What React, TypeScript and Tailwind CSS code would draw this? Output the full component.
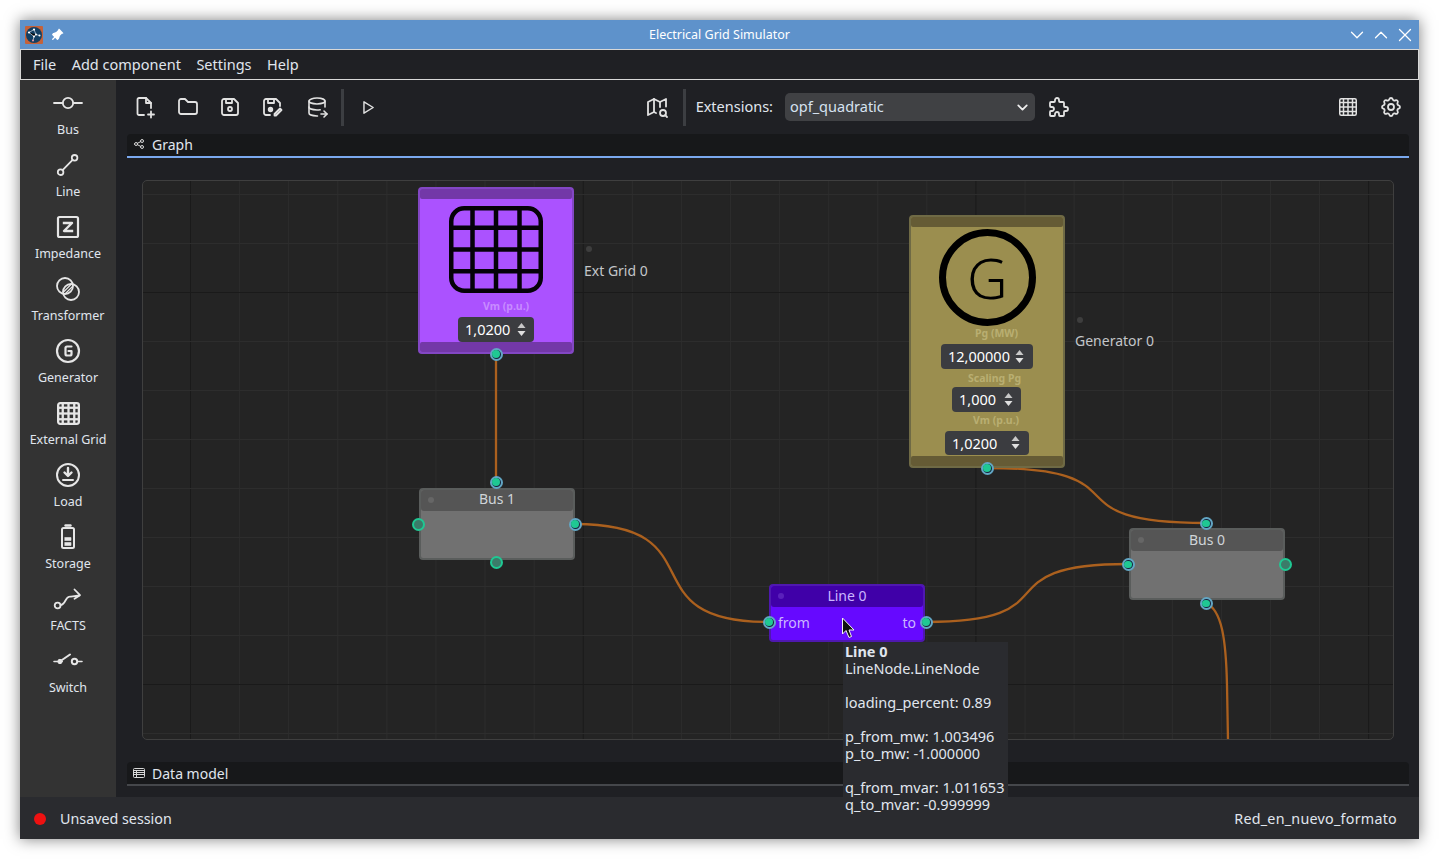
import React from 'react';
import { TbFolder, TbDeviceFloppy, TbDatabaseExport, TbPlayerPlay, TbMapSearch, TbPuzzle, TbSettings, TbShare, TbPinnedFilled, TbChevronDown, TbChevronUp, TbX } from 'react-icons/tb';

const font = "font-['Noto_Sans','Open_Sans',sans-serif]";

function GridIcon({ cols, rows, size, height, stroke, radius, className }: { cols: number; rows: number; size: number; height?: number; stroke: number; radius: number; className?: string }) {
  const h = height || size;
  const xs = Array.from({ length: cols - 1 }, (_, i) => (size / cols) * (i + 1));
  const ys = Array.from({ length: rows - 1 }, (_, i) => (h / rows) * (i + 1));
  return (
    <svg width={size} height={h} viewBox={`0 0 ${size} ${h}`} fill="none" stroke="currentColor" strokeWidth={stroke} className={className}>
      <rect x={stroke / 2} y={stroke / 2} width={size - stroke} height={h - stroke} rx={radius} />
      {xs.map((x) => <line key={x} x1={x} x2={x} y1={0} y2={h} />)}
      {ys.map((y) => <line key={y} x1={0} x2={size} y1={y} y2={y} />)}
    </svg>
  );
}

const icoProps = { width: 30, height: 30, viewBox: '0 0 30 30', fill: 'none', stroke: 'currentColor', strokeWidth: 1.8, strokeLinecap: 'round' as const, strokeLinejoin: 'round' as const };

const BusIcon = () => (
  <svg {...icoProps}><circle cx="15" cy="15" r="5.2" /><path d="M1 15h8.8M20.2 15H29" /></svg>
);
const LineIcon = () => (
  <svg {...icoProps}><circle cx="7.6" cy="22.2" r="2.8" /><circle cx="21.6" cy="7.8" r="2.8" /><path d="M9.6 20.2 19.6 9.8" /></svg>
);
const ImpedanceIcon = () => (
  <svg {...icoProps}><rect x="5" y="5" width="20" height="20" rx="1.500" strokeWidth={2.200} /><path d="M11 11h8l-8 8h8" strokeWidth={2.400} strokeLinecap="square" /></svg>
);
const TransformerIcon = () => (
  <svg {...icoProps}><circle cx="12" cy="12" r="8" /><circle cx="18" cy="18" r="8" /><path d="M12.500 19.500 19.500 12.500M10.500 18 18 10.500" strokeWidth={1.200} /></svg>
);
const GeneratorIcon = () => (
  <svg {...icoProps}><circle cx="15" cy="15" r="11" strokeWidth={2.200} /><path d="M18.500 10.500H14a1.500 1.500 0 0 0-1.500 1.500v6a1.500 1.500 0 0 0 1.500 1.500h3a1.500 1.500 0 0 0 1.500-1.500v-3h-3" strokeWidth={2.200} /></svg>
);
const LoadIcon = () => (
  <svg {...icoProps}><circle cx="15" cy="15" r="11" strokeWidth={2} /><path d="M15 8v7M11.500 12.500 15 16l3.500-3.500" strokeWidth={2.400} /><path d="M10 20h10" strokeWidth={2} /></svg>
);
const StorageIcon = () => (
  <svg {...icoProps}><path d="M12.500 3.500h5" strokeWidth={2.400} /><rect x="9" y="6" width="12" height="20" rx="1.500" strokeWidth={2} /><path d="M12 15.500h6v3h-6zM12 20.500h6v3h-6z" fill="currentColor" strokeWidth={0.6} /></svg>
);
const FactsIcon = () => (
  <svg {...icoProps}><circle cx="4.600" cy="21.500" r="2.900" /><path d="M7.500 21c5 0 4.500-8 9-8.400 3.500-.4 5.500-.4 9.500-1.100" /><path d="M21.500 5.500 27 11.200l-5.500 3.500" /></svg>
);
const SwitchIcon = () => (
  <svg {...icoProps}><path d="M1 15.500h3.500M25 15.500h4" strokeWidth={1.600} /><circle cx="7" cy="15.500" r="2.200" fill="currentColor" strokeWidth={1} /><circle cx="21.500" cy="15.500" r="2.700" strokeWidth={2} /><path d="M7.500 15 17 8.500" strokeWidth={2} /></svg>
);
const NewFileIcon = () => (
  <svg width="24" height="24" viewBox="0 0 24 24" fill="none" stroke="currentColor" strokeWidth="1.800" strokeLinecap="round" strokeLinejoin="round">
    <path d="M11 20H6a1.500 1.500 0 0 1-1.500-1.500v-14A1.500 1.500 0 0 1 6 3h7l5 5v5" />
    <path d="M13 3v5h5" /><path d="M15 19.500h6M18 16.500v6" />
  </svg>
);
const SaveEditIcon = () => (
  <svg width="24" height="24" viewBox="0 0 24 24" fill="none" stroke="currentColor" strokeWidth="1.800" strokeLinecap="round" strokeLinejoin="round">
    <path d="M10 20H6a2 2 0 0 1-2-2V6a2 2 0 0 1 2-2h10l4 4v3" />
    <path d="M8 4v4h6V4" /><circle cx="10.500" cy="14.500" r="1.800" fill="currentColor" />
    <path d="M14.500 20.500v-1.500l5.500-5.500 1.500 1.500-5.500 5.500z" />
  </svg>
);

const AppLogo = () => (
  <svg width="18" height="18" viewBox="0 0 18 18" className="block">
    <rect width="18" height="18" rx="1" fill="#c4623a" />
    <circle cx="9" cy="9" r="8" fill="#123f63" />
    <path d="M4 6.500 9 3.500M9 3.500l2 5M4 6.500l5 4 2-2 3.500 1M9 10.500l-1 4" stroke="#d5dde6" strokeWidth="0.7" />
    <circle cx="4" cy="6.500" r="1.100" fill="#fff" /><circle cx="9" cy="3.500" r="1.100" fill="#fff" /><circle cx="11" cy="8.500" r="1" fill="#fff" />
    <circle cx="9" cy="10.500" r="1" fill="#fff" /><circle cx="14.500" cy="9.500" r="1" fill="#fff" /><circle cx="8" cy="14.500" r="1" fill="#e9a" />
  </svg>
);

function SideItem({ icon, label }: { icon: React.ReactNode; label: string }) {
  return (
    <div className="h-[62px] flex flex-col items-center">
      <div className="h-[30px] w-[30px] flex items-center justify-center text-[#e6e6e6]">{icon}</div>
      <div className="mt-[3px] text-[12.500px] leading-[18px] text-[#e0e6ee] whitespace-nowrap">{label}</div>
    </div>
  );
}

function ToolBtn({ children }: { children: React.ReactNode }) {
  return <div className="w-[43px] h-[30px] flex items-center justify-center text-[#e2e2e2]">{children}</div>;
}

function Sep() {
  return <div className="w-[3px] h-[37px] bg-[#3c3e42]" />;
}

function Spin({ value, className, arrowClass }: { value: string; className: string; arrowClass: string }) {
  return (
    <div className={`absolute h-[24.500px] rounded-[4px] bg-[#3b3c40] text-white text-[14.500px] leading-[24px] ${className}`}>
      <span className="absolute left-[7px] top-0">{value}</span>
      <svg width="9" height="15" viewBox="0 0 9 15" className={`absolute top-[4.500px] ${arrowClass}`}>
        <path d="M4.500 1 8.500 6h-8z" fill="#c8c8c8" /><path d="M4.500 14 .5 9h8z" fill="#e0e0e0" />
      </svg>
    </div>
  );
}

function Handle({ connected, className }: { connected?: boolean; className: string }) {
  if (connected) {
    return (
      <div className={`absolute w-[13px] h-[13px] rounded-full border-[2px] border-[#62a6c4] bg-[#14233a] flex items-center justify-center ${className}`}>
        <div className="w-[7.500px] h-[7.500px] rounded-full bg-[#1fc893]" />
      </div>
    );
  }
  return <div className={`absolute w-[13px] h-[13px] rounded-full border-[2px] border-[#1fc893] bg-[#3b7b69] ${className}`} />;
}

function Dot({ className }: { className: string }) {
  return <div className={`absolute w-[6px] h-[6px] rounded-full bg-[#3e3e3e] ${className}`} />;
}

function BusNode({ title, className, titleClass, handles }: { title: string; className: string; titleClass: string; handles: React.ReactNode }) {
  return (
    <div className={`absolute w-[156px] h-[72px] rounded-[4px] border-[2px] border-[#5a5d5c] bg-[#717171] ${className}`}>
      <div className={`relative h-[21px] rounded-[3px] bg-[#555555] text-center text-[14px] text-[#cfd4d8] ${titleClass}`}>
        <Dot className="left-[7px] top-[7px] bg-[#666666]" />
        {title}
      </div>
      {handles}
    </div>
  );
}

const minorX = Array.from({ length: 26 }, (_, i) => 190.500 + i * 49.090);
const minorY = [194, 243, 341, 390, 439, 488, 537, 586, 635, 733];

function Canvas() {
  return (
    <div className="relative h-full overflow-hidden rounded-[5px] border border-[#3f3f3f] bg-[#242424]">
      <svg className="absolute inset-0" width="1250" height="558" viewBox="143 181 1250 558" fill="none">
        {minorX.map((x, i) => (
          <line key={x} x1={x} x2={x} y1="181" y2="739" stroke={i % 8 === 0 ? '#1a1a1a' : '#2d2d2d'} strokeWidth="1" />
        ))}
        {minorY.map((y) => <line key={y} x1="143" x2="1393" y1={y + 0.5} y2={y + 0.5} stroke="#2d2d2d" strokeWidth="1" />)}
        <line x1="143" x2="1393" y1="292.500" y2="292.500" stroke="#1a1a1a" />
        <line x1="143" x2="1393" y1="684.500" y2="684.500" stroke="#1a1a1a" />
        <g stroke="#ab601e" strokeWidth="2.300">
          <path d="M496 354V482" />
          <path d="M575 524C720 524 625 622 769 622" />
          <path d="M987 468C1151 468 1042 523 1206 523" />
          <path d="M926 622C1076 622 978 564 1128 564" />
          <path d="M1206 603C1222 610 1226 640 1227 685L1228 740" />
        </g>
      </svg>

      {/* Ext grid */}
      <div className="absolute left-[275px] top-[6px] w-[156px] h-[167px] rounded-[4px] border-[2px] border-[#8347c4] bg-[#ab52ff]">
        <div className="h-[10px] rounded-[2px] bg-[#7338a8]" />
        <GridIcon cols={4} rows={4} size={94} height={87} stroke={4.500} radius={13} className="absolute left-[29px] top-[17px] text-[#050208]" />
        <div className="absolute left-[63px] top-[109px] text-[10.500px] leading-[16px] font-bold text-[#c88bff]">Vm (p.u.)</div>
        <Spin value="1,0200" className="left-[38px] top-[128px] w-[76px]" arrowClass="right-[8px]" />
        <div className="absolute left-0 right-0 bottom-0 h-[10px] rounded-[2px] bg-[#7338a8]" />
        <Handle connected className="left-[69.500px] top-[158.500px]" />
      </div>
      <Dot className="left-[443px] top-[65px]" />
      <div className="absolute left-[441px] top-[80px] text-[14px] leading-[20px] text-[#c3c6c9]">Ext Grid 0</div>

      {/* Generator */}
      <div className="absolute left-[766px] top-[34px] w-[155.500px] h-[253px] rounded-[4px] border-[2px] border-[#6f6a45] bg-[#9b8e4f]">
        <div className="h-[10px] rounded-[2px] bg-[#655b35]" />
        <div className="absolute left-[28px] top-[12px] w-[96.500px] h-[96.500px] rounded-full border-[7px] border-black flex items-center justify-center text-[56px] font-light leading-none text-black">G</div>
        <div className="absolute left-[64px] top-[108px] text-[10.500px] leading-[16px] font-bold text-[#b9ae72]">Pg (MW)</div>
        <Spin value="12,00000" className="left-[30px] top-[127px] w-[92px]" arrowClass="right-[9px]" />
        <div className="absolute left-[57px] top-[153px] text-[10.500px] leading-[16px] font-bold text-[#b9ae72]">Scaling Pg</div>
        <Spin value="1,000" className="left-[41px] top-[170px] w-[69px]" arrowClass="right-[8px]" />
        <div className="absolute left-[62px] top-[195px] text-[10.500px] leading-[16px] font-bold text-[#b9ae72]">Vm (p.u.)</div>
        <Spin value="1,0200" className="left-[34px] top-[213.500px] w-[84px]" arrowClass="right-[9px]" />
        <div className="absolute left-0 right-0 bottom-0 h-[10px] rounded-[2px] bg-[#655b35]" />
        <Handle connected className="left-[69.500px] top-[244.500px]" />
      </div>
      <Dot className="left-[934px] top-[136px]" />
      <div className="absolute left-[932px] top-[150px] text-[14px] leading-[20px] text-[#c3c6c9]">Generator 0</div>

      <BusNode
        title="Bus 1"
        titleClass="leading-[18px]"
        className="left-[276px] top-[306.500px]"
        handles={
          <>
            <Handle className="left-[-9.500px] top-[28px]" />
            <Handle connected className="right-[-8.500px] top-[28px]" />
            <Handle connected className="left-[68.500px] top-[-14px]" />
            <Handle className="left-[68.500px] top-[66px]" />
          </>
        }
      />
      <BusNode
        title="Bus 0"
        titleClass="leading-[20px]"
        className="left-[986px] top-[347px]"
        handles={
          <>
            <Handle connected className="left-[-9.500px] top-[28px]" />
            <Handle className="right-[-8.500px] top-[28px]" />
            <Handle connected className="left-[68.500px] top-[-13px]" />
            <Handle connected className="left-[68.500px] top-[67px]" />
          </>
        }
      />

      {/* Line */}
      <div className="absolute left-[626px] top-[403px] w-[156px] h-[58px] rounded-[4px] border-[2px] border-[#4f18b0] bg-[#6609ff] text-[14px] leading-[20px] text-[#cbb6ff]">
        <div className="relative h-[21px] rounded-[3px] bg-[#4000a8] text-center">
          <Dot className="left-[7px] top-[7px] bg-[#5a20bb]" />
          Line 0
        </div>
        <div className="flex justify-between px-[7px] pt-[6px]">
          <span>from</span><span>to</span>
        </div>
        <Handle connected className="left-[-8.500px] top-[29.500px]" />
        <Handle connected className="right-[-9.500px] top-[29.500px]" />
      </div>
    </div>
  );
}

function TabBar({ icon, label, lineClass }: { icon: React.ReactNode; label: string; lineClass: string }) {
  return (
    <div className={`h-[24px] shrink-0 flex items-center gap-[7px] pl-[6px] rounded-t-[4px] bg-[#17181a] border-b-[2px] text-[14px] text-[#e0e6ee] ${lineClass}`}>
      <span className="text-[#d8d8d8]">{icon}</span>
      {label}
    </div>
  );
}

const DataIcon = () => (
  <svg width="12" height="12" viewBox="0 0 12 12" fill="none" stroke="currentColor" strokeWidth="1" className="block">
    <rect x=".5" y="1.500" width="11" height="9" rx="1" /><path d="M.5 3.500h11M.5 5.500h11M.5 7.500h11M3.500 3.500v7" />
  </svg>
);

export default function App() {
  return (
    <div className={`relative w-[1439px] h-[859px] overflow-hidden bg-white p-[20px] ${font}`}>
      <div className="relative w-[1399px] h-[819px] flex flex-col bg-[#1f2024] shadow-[0_0_14px_rgba(0,0,0,0.5)]">
        <div className="h-[29px] shrink-0 grid grid-cols-[1fr_auto_1fr] items-center bg-[#5e92cb] text-white">
          <div className="flex items-center gap-[6px] pl-[5px]">
            <AppLogo />
            <TbPinnedFilled size={16} className="rotate-45" />
          </div>
          <div className="pt-[1px] text-[12.500px] font-normal">Electrical Grid Simulator</div>
          <div className="flex justify-end items-center gap-[2px] pr-[3px]">
            <TbChevronDown size={22} strokeWidth={1.400} /><TbChevronUp size={22} strokeWidth={1.400} /><TbX size={22} strokeWidth={1.400} />
          </div>
        </div>
        <div className="h-[31px] shrink-0 flex items-center gap-[15.500px] pl-[12px] bg-[#1f2024] border border-[#d8d8d8] text-[14.500px] text-[#e0e6ee]">
          <span>File</span><span>Add component</span><span>Settings</span><span>Help</span>
        </div>
        <div className="flex-1 min-h-0 flex">
          <div className="w-[96px] shrink-0 pt-[8px] bg-[#333333]">
            <SideItem icon={<BusIcon />} label="Bus" />
            <SideItem icon={<LineIcon />} label="Line" />
            <SideItem icon={<ImpedanceIcon />} label="Impedance" />
            <SideItem icon={<TransformerIcon />} label="Transformer" />
            <SideItem icon={<GeneratorIcon />} label="Generator" />
            <SideItem icon={<GridIcon cols={4} rows={4} size={23} stroke={2.300} radius={2} />} label="External Grid" />
            <SideItem icon={<LoadIcon />} label="Load" />
            <SideItem icon={<StorageIcon />} label="Storage" />
            <SideItem icon={<FactsIcon />} label="FACTS" />
            <SideItem icon={<SwitchIcon />} label="Switch" />
          </div>
          <div className="flex-1 min-w-0 flex flex-col">
            <div className="h-[54px] shrink-0 flex items-center pl-[7px] pr-[7px]">
              <ToolBtn><NewFileIcon /></ToolBtn>
              <ToolBtn><TbFolder size={24} strokeWidth={1.800} /></ToolBtn>
              <ToolBtn><span className="mr-[2px]"><TbDeviceFloppy size={24} strokeWidth={1.800} /></span></ToolBtn>
              <ToolBtn><span className="mr-[3px]"><SaveEditIcon /></span></ToolBtn>
              <ToolBtn><TbDatabaseExport size={24} strokeWidth={1.600} /></ToolBtn>
              <div className="ml-[3px]"><Sep /></div>
              <div className="ml-[2px]"><ToolBtn><TbPlayerPlay size={17} strokeWidth={2} /></ToolBtn></div>
              <div className="flex-1" />
              <ToolBtn><span className="mr-[3px]"><TbMapSearch size={24} strokeWidth={1.800} /></span></ToolBtn>
              <div className="ml-[3px]"><Sep /></div>
              <div className="ml-[10px] text-[14.500px] text-[#e0e6ee] whitespace-nowrap">Extensions:</div>
              <div className="ml-[12px] w-[250px] h-[28px] flex items-center justify-between pl-[5px] pr-[4px] rounded-[5px] bg-[#404144] text-[14.500px] text-[#d6e2f0]">
                <span>opf_quadratic</span>
                <TbChevronDown size={17} strokeWidth={2.500} className="text-[#eeeeee]" />
              </div>
              <div className="ml-[2px]"><ToolBtn><TbPuzzle size={24} strokeWidth={1.800} /></ToolBtn></div>
              <div className="w-[246px]" />
              <ToolBtn><GridIcon cols={4} rows={4} size={18} stroke={1.500} radius={1.500} /></ToolBtn>
              <ToolBtn><TbSettings size={24} strokeWidth={1.800} /></ToolBtn>
            </div>
            <div className="flex-1 min-h-0 flex flex-col ml-[11px] mr-[10px]">
              <TabBar icon={<TbShare size={12} className="block" />} label="Graph" lineClass="pb-[2px] border-[#7aa8ee]" />
              <div className="flex-1 min-h-0 px-[15px] py-[22px]">
                <Canvas />
              </div>
              <TabBar icon={<DataIcon />} label="Data model" lineClass="border-[#45474b]" />
            </div>
            <div className="h-[11px] shrink-0" />
          </div>
        </div>
        <div className="h-[42px] shrink-0 flex items-center justify-between pl-[14px] pr-[22px] pt-[1px] bg-[#2a2b2f] text-[14.300px] text-[#e0e6ee]">
          <div className="flex items-center gap-[14px]">
            <div className="w-[12px] h-[12px] rounded-full bg-[#ee1111]" />
            <span>Unsaved session</span>
          </div>
          <span className="tracking-[0.25px]">Red_en_nuevo_formato</span>
        </div>

        {/* tooltip hanging off the hovered node */}
        <div className="absolute left-[823px] top-[622px] w-[165px] h-[176px] bg-[#2a2b2f] pl-[2px] pt-[1px] text-[14.500px] leading-[17px] text-[#e0e6ee] whitespace-pre">
          <div className="font-bold">Line 0</div>
          <div>LineNode.LineNode</div>
          <div>&nbsp;</div>
          <div>loading_percent: 0.89</div>
          <div>&nbsp;</div>
          <div>p_from_mw: 1.003496</div>
          <div>p_to_mw: -1.000000</div>
          <div>&nbsp;</div>
          <div>q_from_mvar: 1.011653</div>
          <div>q_to_mvar: -0.999999</div>
        </div>
        {/* mouse pointer */}
        <svg className="absolute left-[821px] top-[597px]" width="14" height="22" viewBox="0 0 14 22">
          <path d="M1.500 1 1.500 17 5 13.500 8 20.500 10.500 19.500 8 13 13 13z" fill="#111" stroke="#f2f2f2" strokeWidth="1" />
        </svg>
      </div>
    </div>
  );
}
